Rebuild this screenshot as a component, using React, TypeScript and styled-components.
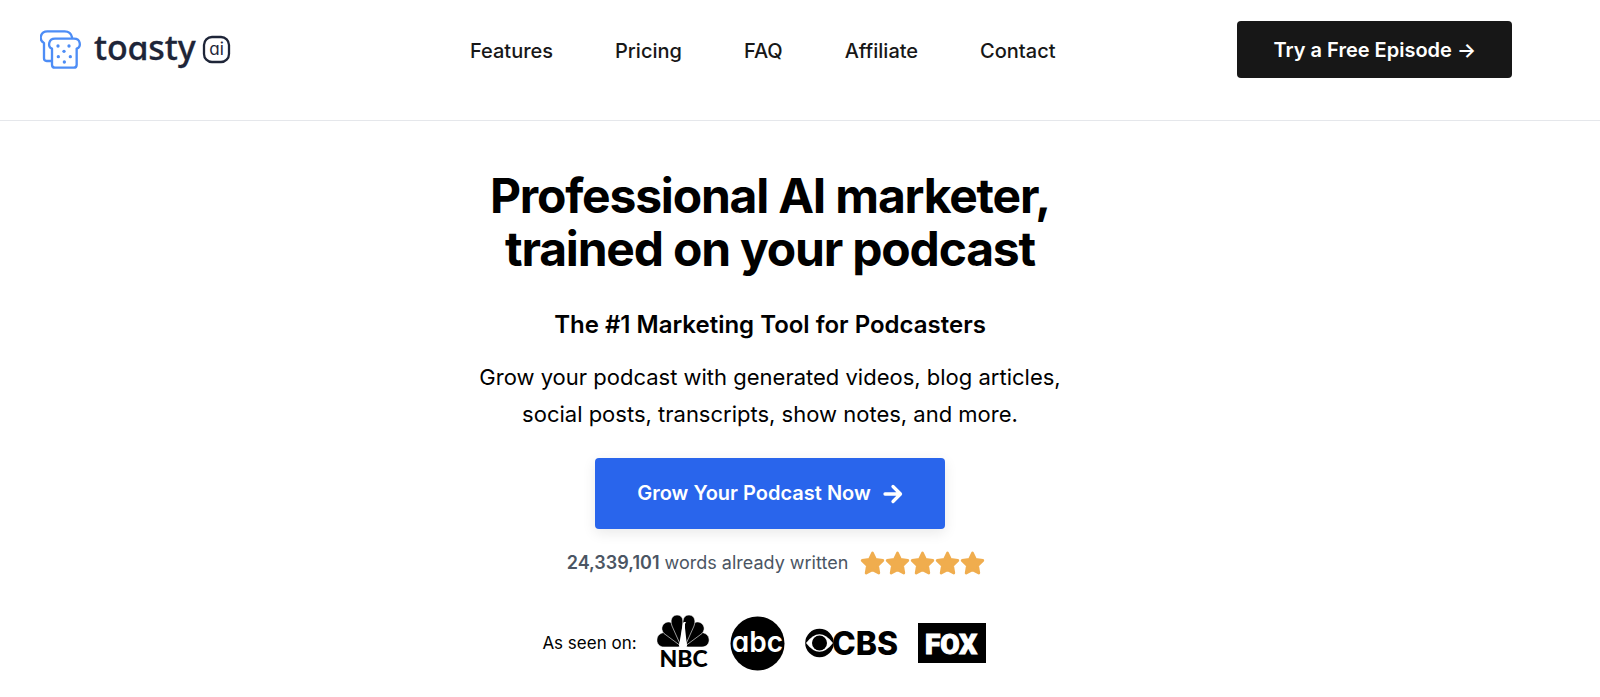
import React from "react";
import styled, { createGlobalStyle } from "styled-components";

const GlobalStyle = createGlobalStyle`
  *, *::before, *::after { box-sizing: border-box; }
  body {
    margin: 0;
    background: #ffffff;
    color: #000000;
    font-family: Inter, "Liberation Sans", sans-serif;
  }
  h1, h2, p { margin: 0; }
`;

const Header = styled.header`
  display: flex;
  align-items: center;
  padding: 21px 88px 42px 40px;
  border-bottom: 1px solid #e5e7eb;
`;

const Brand = styled.a`
  display: flex;
  align-items: center;
  color: #1e2538;
  text-decoration: none;
`;

const Nav = styled.nav`
  flex: 1;
  display: flex;
  justify-content: center;
  gap: 62px;
  padding: 2px 0 0 56px;
`;

const NavLink = styled.a`
  color: #171717;
  font-size: 20px;
  font-weight: 500;
  line-height: 28px;
  text-decoration: none;
`;

const Button = styled.button<{ $primary?: boolean }>`
  display: inline-flex;
  align-items: center;
  justify-content: center;
  gap: 12px;
  border: 0;
  border-radius: 4px;
  font-family: inherit;
  font-size: 20px;
  font-weight: 600;
  line-height: 29px;
  color: #ffffff;
  cursor: pointer;
  background: ${(p) => (p.$primary ? "#2965ec" : "#171717")};
  padding: ${(p) => (p.$primary ? "21px 42px" : "15px 36px 13px")};
  box-shadow: ${(p) => (p.$primary ? "0 4px 14px rgba(0, 0, 0, 0.09)" : "none")};
`;

const Hero = styled.main`
  display: flex;
  flex-direction: column;
  align-items: center;
  padding: 48px 60px 24px 0;
  text-align: center;
`;

const Title = styled.h1`
  font-size: 48px;
  font-weight: 700;
  line-height: 53px;
  letter-spacing: -0.025em;
`;

const Subtitle = styled.h2`
  margin-top: 32px;
  font-size: 24px;
  font-weight: 600;
  line-height: 36px;
`;

const Lead = styled.p`
  margin: 16px 0 25px;
  font-size: 22px;
  line-height: 37px;
`;

const Stats = styled.div`
  display: flex;
  align-items: center;
  gap: 12px;
  margin: 20px 0 36px 12px;
  color: #4b5563;
  font-size: 18px;
  line-height: 28px;
`;

const Count = styled.strong`
  font-weight: 600;
`;

const Press = styled.div`
  display: flex;
  align-items: center;
  gap: 20px;
  margin-right: 12px;
  font-size: 17px;
  line-height: 28px;
`;

const Art = styled.svg`
  display: block;
  flex: none;
`;

const Wordmark = styled.text`
  font-feature-settings: "cv11" 1;
`;

const navItems = ["Features", "Pricing", "FAQ", "Affiliate", "Contact"];

const crumbs = [[84, 93], [117, 93], [102, 109], [85, 125], [121, 125], [103, 141]];

function Logo() {
  return (
    <Art width="192" height="56" viewBox="0 -5 192 56" role="img" aria-label="toasty ai">
      <g transform="translate(-10 -12) scale(0.33333)" fill="none" stroke="#4d8df6" strokeWidth="7" strokeLinecap="round" strokeLinejoin="round">
        <path d="M64 138H50Q42 138 42 130V84C26 76 30 49 52 49H104C117 49 124 57 126 67" />
        <path d="M75 71H132C152 71 155 95 140 101V149Q140 158 131 158H75Q66 158 66 149V101C52 95 55 71 75 71Z" />
        <g fill="#4d8df6" stroke="none">
          {crumbs.map(([x, y]) => <circle key={x + "-" + y} cx={x} cy={y} r="5" />)}
        </g>
      </g>
      <g fill="#1e2538">
        <Wordmark x="54" y="33" fontFamily="'Noto Sans', sans-serif" fontSize="34" fontWeight="500" stroke="#1e2538" strokeWidth="0.3">
          to<tspan fontFamily="Inter" fontSize="33">a</tspan>sty
        </Wordmark>
        <rect x="164" y="10" width="25" height="25" rx="8" fill="none" stroke="#1e2538" strokeWidth="2.300" />
        <Wordmark x="176.500" y="28" textAnchor="middle" fontFamily="Inter, sans-serif" fontSize="17">ai</Wordmark>
      </g>
    </Art>
  );
}

function Star() {
  return (
    <svg width="25" height="25" viewBox="0 0 25 25" fill="#f0ad4e" stroke="#f0ad4e" strokeWidth="2.800" strokeLinejoin="round">
      <path d="M12.500 2L15.500 8.400L22.800 9.400L17.600 14.600L18.800 22L12.500 18.800L6.200 22L7.400 14.600L2.200 9.400L9.500 8.400Z" />
    </svg>
  );
}

const StarRow = styled.span`
  display: flex;
`;

function Nbc() {
  return (
    <Art width="53" height="60" viewBox="0 -3 53 60" role="img" aria-label="NBC">
      <g stroke="#fff" strokeWidth="0.6">
        <path d="M22 31H7C-2 31-3 18 7 16.500Q11 17 23 29Z" />
        <path d="M30 31H45C54 31 55 18 45 16.500Q41 17 29 29Z" />
        <path d="M22.500 29L7 17.500C1 11 9 3 15 7Q18 10 23 27Z" />
        <path d="M29.500 29L45 17.500C51 11 43 3 37 7Q34 10 29 27Z" />
        <path d="M23.500 29L15 10C12 2 17-1 20-1C24-1 26.500 2 26 8Z" />
        <path d="M28.500 29L37 10C40 2 35-1 32-1C28-1 25.500 2 26 8Z" />
      </g>
      <path d="M26 7L27 6H29L28 8V12L30 30H22L25 12Z" fill="#fff" />
      <text x="26.500" y="51" textAnchor="middle" fontFamily="Lato, sans-serif" fontWeight="900" fontSize="23">NBC</text>
    </Art>
  );
}

function Abc() {
  return (
    <Art width="55" height="55" viewBox="0 0 55 55" role="img" aria-label="abc">
      <circle cx="27.500" cy="27.500" r="27" />
      <Wordmark x="27.500" y="36" textAnchor="middle" fill="#fff" fontFamily="Inter, sans-serif" fontWeight="600" fontSize="28">abc</Wordmark>
    </Art>
  );
}

function Cbs() {
  return (
    <Art width="93" height="44" viewBox="0 -7 93 44" role="img" aria-label="CBS">
      <circle cx="14.500" cy="15" r="14.300" />
      <path d="M1 15Q14.500-2.500 28 15Q14.500 32.500 1 15Z" fill="#fff" />
      <circle cx="14.500" cy="15" r="7.500" />
      <text x="27" y="26.500" fontFamily="Inter, sans-serif" fontWeight="800" fontSize="32">CBS</text>
    </Art>
  );
}

function Fox() {
  return (
    <Art width="68" height="40" viewBox="0 0 68 40" role="img" aria-label="FOX">
      <rect width="68" height="40" />
      <text x="33" y="30.500" textAnchor="middle" fill="#fff" stroke="#fff" fontFamily="Roboto, sans-serif" fontWeight="900" fontSize="28">FOX</text>
    </Art>
  );
}

export default function App() {
  return (
    <>
      <GlobalStyle />
      <Header>
        <Brand href="#"><Logo /></Brand>
        <Nav>
          {navItems.map((item) => (
            <NavLink key={item} href={"#" + item.toLowerCase()}>{item}</NavLink>
          ))}
        </Nav>
        <Button>Try a Free Episode →</Button>
      </Header>
      <Hero>
        <Title>Professional AI marketer,<br />trained on your podcast</Title>
        <Subtitle>The #1 Marketing Tool for Podcasters</Subtitle>
        <Lead>
          Grow your podcast with generated videos, blog articles,<br />
          social posts, transcripts, show notes, and more.
        </Lead>
        <Button $primary>
          Grow Your Podcast Now
          <svg width="20" height="20" viewBox="0 0 20 20" fill="none" stroke="currentColor" strokeWidth="3.300" strokeLinecap="round" strokeLinejoin="round" aria-hidden="true">
            <path d="M2 10H17M10 2.500L17.500 10L10 17.500" />
          </svg>
        </Button>
        <Stats>
          <span><Count>24,339,101</Count> words already written</span>
          <StarRow role="img" aria-label="5 out of 5 stars">
            {[1, 2, 3, 4, 5].map((n) => <Star key={n} />)}
          </StarRow>
        </Stats>
        <Press>
          <span>As seen on:</span>
          <Nbc />
          <Abc />
          <Cbs />
          <Fox />
        </Press>
      </Hero>
    </>
  );
}
